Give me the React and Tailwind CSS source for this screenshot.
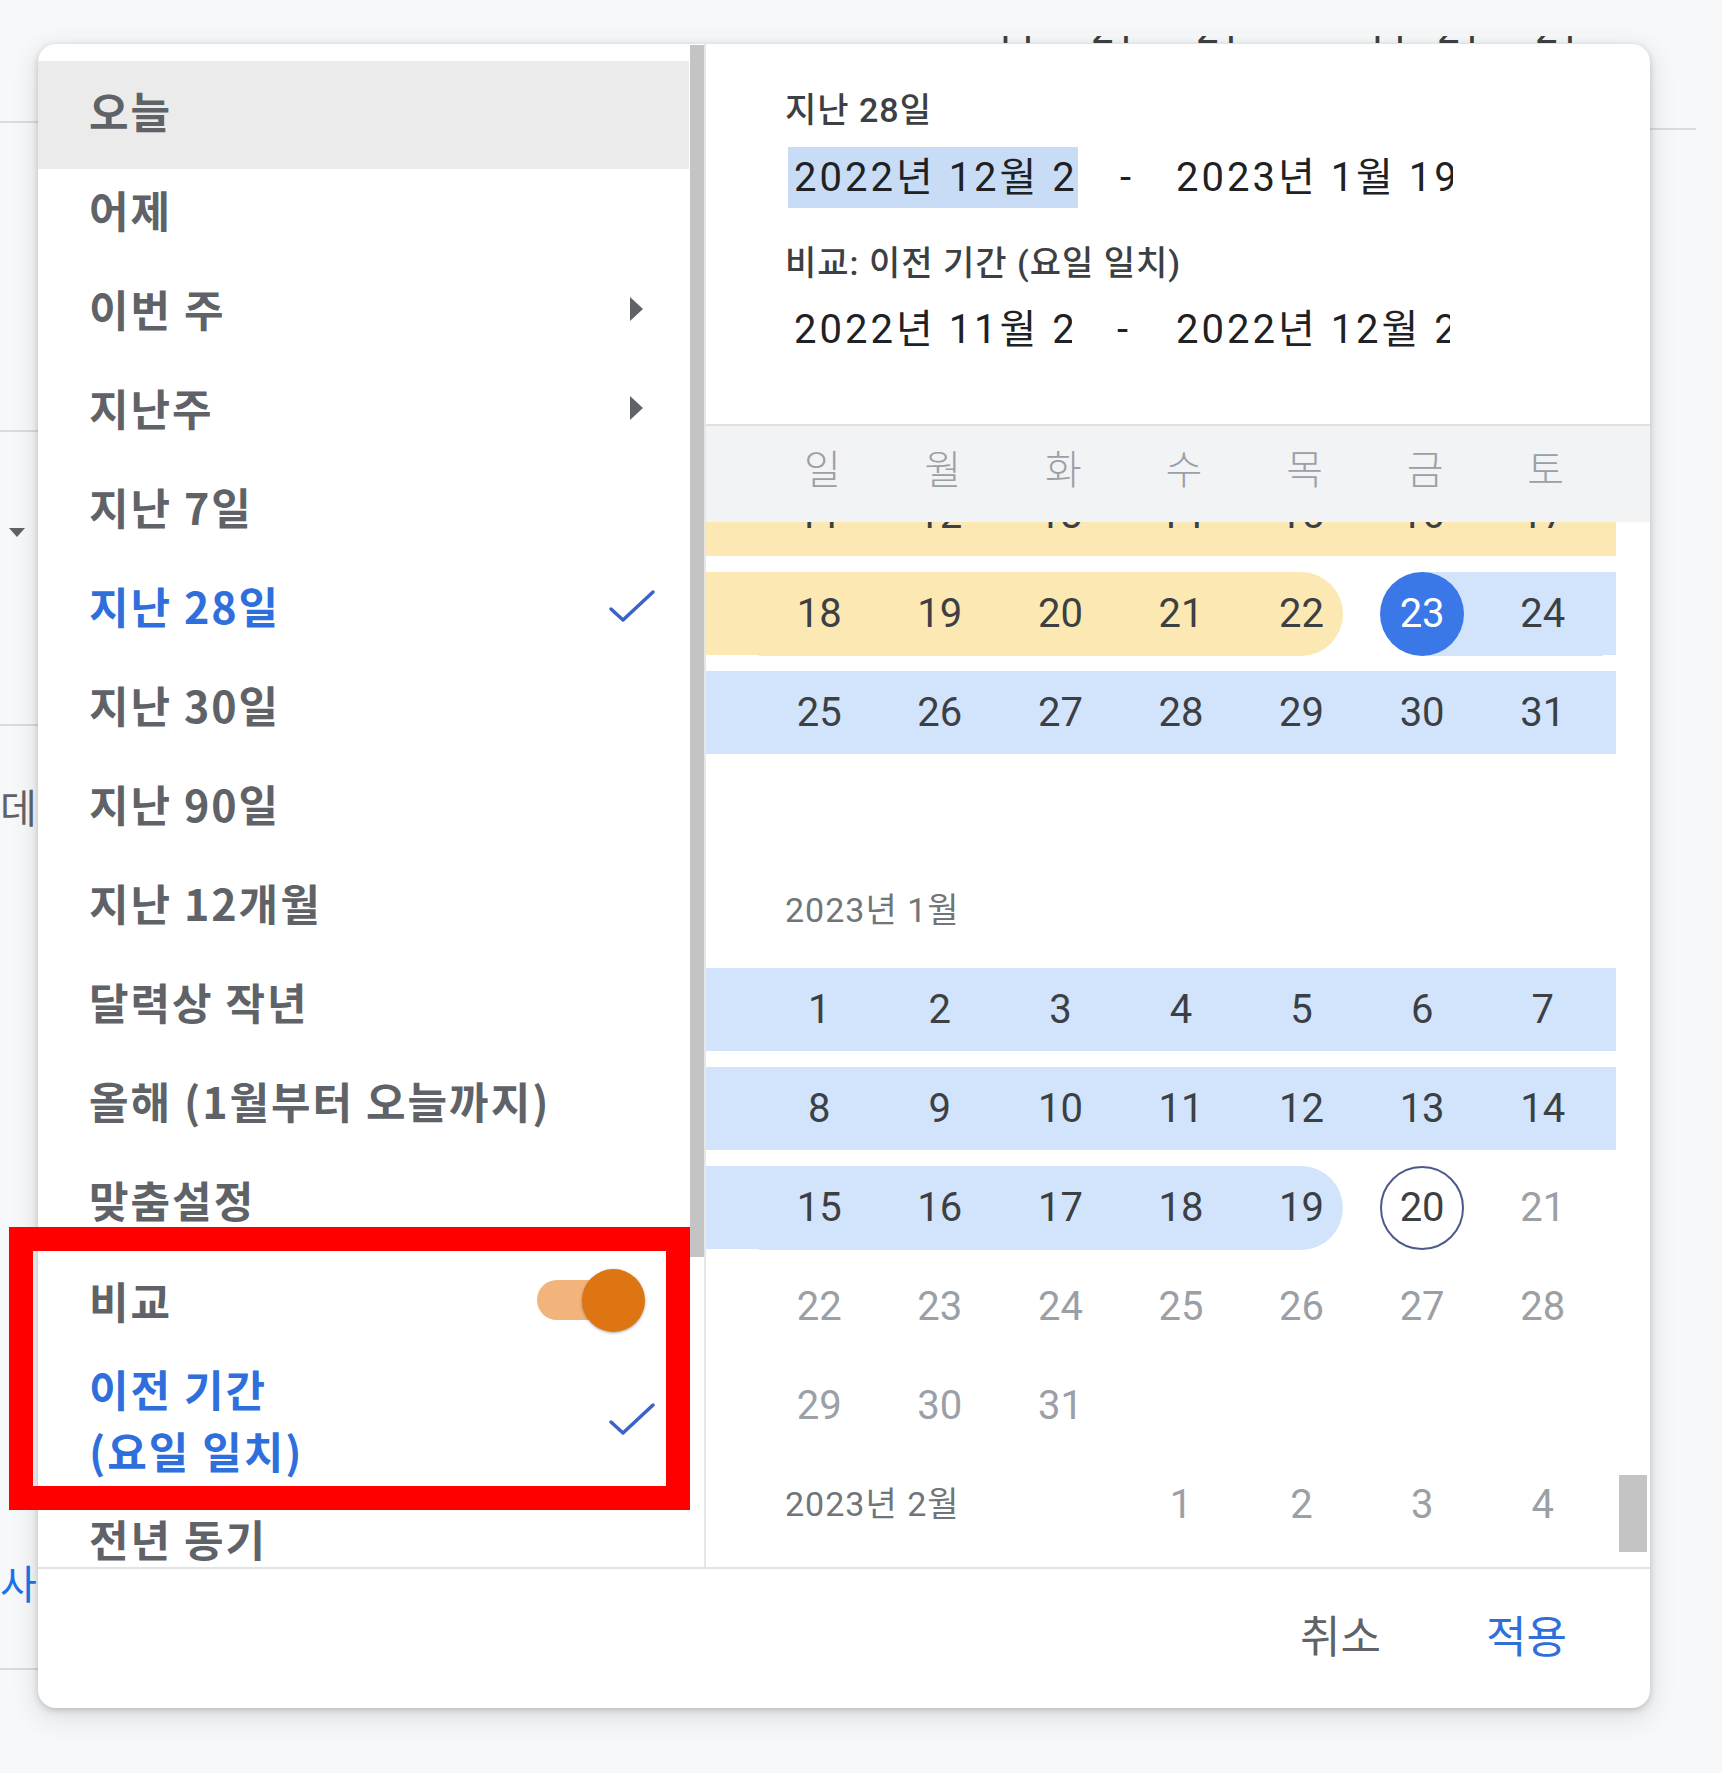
import React from 'react'
import clsx from 'clsx'

const MENU = [
  { label: '오늘', highlight: true },
  { label: '어제' },
  { label: '이번 주', arrow: true },
  { label: '지난주', arrow: true },
  { label: '지난 7일' },
  { label: '지난 28일', active: true },
  { label: '지난 30일' },
  { label: '지난 90일' },
  { label: '지난 12개월' },
  { label: '달력상 작년' },
  { label: '올해 (1월부터 오늘까지)' },
  { label: '맞춤설정' },
]

const WEEK = ['일', '월', '화', '수', '목', '금', '토']

const PAD = {
  y: 'bg-[#fce8b2]',
  b: 'bg-[#d2e3fc]',
  n: '',
}

// t: y | b | yEnd | bEnd | start | today | off
const ROWS = [
  { l: 'y', r: 'y', cells: [11, 12, 13, 14, 15, 16, 17].map((n) => ({ n, t: 'y' })) },
  {
    l: 'y', r: 'b',
    cells: [
      { n: 18, t: 'y' }, { n: 19, t: 'y' }, { n: 20, t: 'y' }, { n: 21, t: 'y' },
      { n: 22, t: 'yEnd' }, { n: 23, t: 'start' }, { n: 24, t: 'b' },
    ],
  },
  { l: 'b', r: 'b', cells: [25, 26, 27, 28, 29, 30, 31].map((n) => ({ n, t: 'b' })) },
  { empty: true },
  { label: '2023년 1월' },
  { l: 'b', r: 'b', cells: [1, 2, 3, 4, 5, 6, 7].map((n) => ({ n, t: 'b' })) },
  { l: 'b', r: 'b', cells: [8, 9, 10, 11, 12, 13, 14].map((n) => ({ n, t: 'b' })) },
  {
    l: 'b', r: 'n',
    cells: [
      { n: 15, t: 'b' }, { n: 16, t: 'b' }, { n: 17, t: 'b' }, { n: 18, t: 'b' },
      { n: 19, t: 'bEnd' }, { n: 20, t: 'today' }, { n: 21, t: 'off' },
    ],
  },
  { l: 'n', r: 'n', cells: [22, 23, 24, 25, 26, 27, 28].map((n) => ({ n, t: 'off' })) },
  { l: 'n', r: 'n', cells: [{ n: 29, t: 'off' }, { n: 30, t: 'off' }, { n: 31, t: 'off' }, null, null, null, null] },
]

function Check() {
  return (
    <svg width="48" height="34" viewBox="0 0 48 34" fill="none">
      <path d="M3 20 L15 31 L45 3" stroke="#3a62c9" strokeWidth="3.5" strokeLinecap="round" strokeLinejoin="round" />
    </svg>
  )
}

function MenuItem({ label, active, arrow, highlight }) {
  return (
    <div
      className={clsx(
        'flex shrink-0 items-center pl-[51px] pr-[33px]',
        highlight ? '-mb-[9px] h-[108px] bg-[#ebebeb] pb-[10px]' : 'h-[99px]'
      )}
    >
      <span
        className={clsx(
          'flex-1 whitespace-nowrap text-[43px] font-semibold tracking-[2px]',
          active ? 'text-[#2f6fdc]' : 'text-[#5f6368]'
        )}
      >
        {label}
      </span>
      {arrow && (
        <svg width="15" height="26" viewBox="0 0 15 26" className="mr-[12px]">
          <polygon points="1,1 14,13 1,25" fill="#5f6368" />
        </svg>
      )}
      {active && <Check />}
    </div>
  )
}

function Cell({ c }) {
  if (!c) return <div />
  const { n, t } = c
  if (t === 'yEnd' || t === 'bEnd') {
    return (
      <div className="flex h-full">
        <div
          className={clsx(
            'mr-[19px] flex flex-1 items-center justify-center rounded-r-full pl-[19px] text-[#3c4043]',
            t === 'yEnd' ? 'bg-[#fce8b2]' : 'bg-[#d2e3fc]'
          )}
        >
          {n}
        </div>
      </div>
    )
  }
  if (t === 'start') {
    return (
      <div className="flex h-full items-center justify-center bg-[linear-gradient(90deg,transparent_50%,#d2e3fc_50%)]">
        <div className="flex h-[84px] w-[84px] items-center justify-center rounded-full bg-[#3b78e7] text-white">{n}</div>
      </div>
    )
  }
  if (t === 'today') {
    return (
      <div className="flex h-full items-center justify-center">
        <div className="flex h-[84px] w-[84px] items-center justify-center rounded-full border-2 border-[#4b5a8a] text-[#3c4043]">{n}</div>
      </div>
    )
  }
  return (
    <div
      className={clsx(
        'flex h-full items-center justify-center',
        t === 'y' && 'bg-[#fce8b2] text-[#3c4043]',
        t === 'b' && 'bg-[#d2e3fc] text-[#3c4043]',
        t === 'off' && 'text-[#9aa0a6]'
      )}
    >
      {n}
    </div>
  )
}

function CalRow({ row }) {
  if (row.empty) return <div className="h-[99px] shrink-0" />
  if (row.label) {
    return (
      <div className="my-[8px] flex h-[83px] shrink-0 items-center pl-[79px] text-[34px] tracking-[1px] text-[#70757a]">{row.label}</div>
    )
  }
  return (
    <div className="my-[8px] flex h-[83px] shrink-0">
      <div className={clsx('w-[53px] shrink-0', PAD[row.l])} />
      <div className="grid w-[844px] shrink-0 grid-cols-7">
        {row.cells.map((c, i) => <Cell key={i} c={c} />)}
      </div>
      <div className={clsx('w-[13px] shrink-0', PAD[row.r])} />
    </div>
  )
}

function Background() {
  return (
    <div className="flex h-[1773px] w-full">
      <div className="flex w-[40px] shrink-0 flex-col font-['Noto_Sans_CJK_KR',sans-serif]">
        <div className="h-[121px]" />
        <div className="h-[309px] border-t-2 border-[#dadce0]" />
        <div className="flex h-[294px] flex-col border-t-2 border-[#dadce0] pl-[9px] pt-[96px]">
          <svg width="16" height="10" viewBox="0 0 16 10">
            <polygon points="0,0 16,0 8,9" fill="#5f6368" />
          </svg>
        </div>
        <div className="flex h-[944px] flex-col border-t-2 border-[#dadce0] pt-[56px]">
          <span className="whitespace-nowrap text-[40px] leading-[48px] text-[#5f6368]">데이터</span>
          <span className="mt-[728px] whitespace-nowrap text-[40px] leading-[48px] text-[#1a73e8]">사용</span>
        </div>
        <div className="border-t-2 border-[#dadce0]" />
      </div>
      <div className="flex flex-1 flex-col">
        <div className="h-[36px]" />
        <div className="flex h-[8px] overflow-hidden pl-[953px] font-['Roboto',sans-serif] text-[40px] leading-[40px] text-[#3c4043]">
          <div className="-mt-[26px] flex">
            <span className="w-[98px]">11</span>
            <span className="w-[105px]">21</span>
            <span className="w-[169px]">21</span>
            <span className="w-[72px]">11</span>
            <span className="w-[98px]">21</span>
            <span>21</span>
          </div>
        </div>
      </div>
      <div className="flex w-[72px] shrink-0 flex-col">
        <div className="h-[128px]" />
        <div className="w-[46px] border-t-2 border-[#dadce0]" />
      </div>
    </div>
  )
}

export default function App() {
  return (
    <div className="relative h-[1773px] w-[1722px] overflow-hidden bg-[#f7f8fa]">
      <Background />

      {/* date range dialog */}
      <div className="absolute left-[38px] top-[44px] flex h-[1664px] w-[1612px] flex-col overflow-hidden rounded-[18px] bg-white shadow-[0_2px_6px_rgba(60,64,67,0.25),0_8px_24px_4px_rgba(60,64,67,0.12)]">
        <div className="flex h-[1523px] shrink-0">
          {/* presets */}
          <div className="flex w-[651px] shrink-0 flex-col overflow-hidden pt-[17px] font-['Noto_Sans_CJK_KR',sans-serif]">
            {MENU.map((m) => <MenuItem key={m.label} {...m} />)}
            <div className="flex h-[100px] shrink-0 items-center border-t-2 border-[#e3e3e3] pl-[51px] pr-[44px]">
              <span className="flex-1 text-[43px] font-semibold tracking-[2px] text-[#5f6368]">비교</span>
              <div className="flex items-center">
                <div className="h-[40px] w-[76px] rounded-full bg-[#f3b47c]" />
                <div className="-ml-[31px] h-[63px] w-[63px] rounded-full bg-[#dd7612] shadow-[0_1px_3px_rgba(0,0,0,0.35)]" />
              </div>
            </div>
            <div className="flex h-[140px] shrink-0 items-center pl-[51px] pr-[33px]">
              <div className="flex flex-1 flex-col text-[43px] font-semibold leading-[62px] tracking-[2px] text-[#2f6fdc]">
                <span>이전 기간</span>
                <span>(요일 일치)</span>
              </div>
              <Check />
            </div>
            <div className="flex h-[99px] shrink-0 items-center pl-[51px]">
              <span className="text-[43px] font-semibold tracking-[2px] text-[#5f6368]">전년 동기</span>
            </div>
          </div>

          {/* menu scrollbar */}
          <div className="w-[17px] shrink-0 border-r-2 border-[#e6e6e6] pl-[1px] pt-[1px]">
            <div className="h-[1212px] w-[14px] bg-[#c4c4c4]" />
          </div>

          {/* calendar side */}
          <div className="flex w-[944px] shrink-0 flex-col font-['Roboto','Noto_Sans_CJK_KR',sans-serif]">
            <div className="h-[380px] shrink-0 pl-[79px] pt-[45px] text-[#202124]">
              <div className="text-[34px] font-medium leading-[42px] tracking-[1px] text-[#3c4043]">지난 28일</div>
              <div className="mt-[16px] flex h-[61px] items-center text-[40px] leading-[61px] tracking-[3px]">
                <div className="ml-[3px] h-full w-[290px] overflow-hidden whitespace-nowrap bg-[#c9dcf6] pl-[6px]">2022년 12월 23일</div>
                <div className="w-[98px] text-center">-</div>
                <div className="w-[277px] overflow-hidden whitespace-nowrap">2023년 1월 19일</div>
              </div>
              <div className="mt-[34px] text-[34px] font-medium leading-[42px] tracking-[1px] text-[#3c4043]">비교: 이전 기간 (요일 일치)</div>
              <div className="mt-[15px] flex h-[61px] items-center text-[40px] leading-[61px] tracking-[3px]">
                <div className="ml-[3px] h-full w-[284px] overflow-hidden whitespace-nowrap pl-[6px]">2022년 11월 25일</div>
                <div className="w-[104px] text-center">-</div>
                <div className="w-[274px] overflow-hidden whitespace-nowrap">2022년 12월 22일</div>
              </div>
            </div>

            <div className="flex h-[98px] shrink-0 items-center border-t-2 border-[#e0e0e0] bg-[#f1f3f4] pl-[56px] pr-[44px]">
              <div className="grid w-[844px] grid-cols-7 font-['Noto_Sans_CJK_KR',sans-serif] text-[40px] font-light text-[#9aa0a6]">
                {WEEK.map((w) => <span key={w} className="-mt-[14px] text-center">{w}</span>)}
              </div>
            </div>

            <div className="flex min-h-0 flex-1">
              <div className="flex w-[910px] shrink-0 flex-col overflow-hidden text-[40px]">
                <div className="-mt-[57px] flex flex-col">
                  {ROWS.map((r, i) => <CalRow key={i} row={r} />)}
                  <div className="my-[8px] flex h-[83px] shrink-0">
                    <div className="w-[53px] shrink-0" />
                    <div className="grid w-[844px] shrink-0 grid-cols-7">
                      <div className="col-span-3 flex items-center pl-[26px] text-[34px] tracking-[1px] text-[#70757a]">2023년 2월</div>
                      {[1, 2, 3, 4].map((n) => <Cell key={n} c={{ n, t: 'off' }} />)}
                    </div>
                  </div>
                </div>
              </div>
              <div className="flex w-[34px] shrink-0 flex-col justify-end pb-[15px] pl-[3px]">
                <div className="h-[77px] w-[28px] bg-[#c4c4c4]" />
              </div>
            </div>
          </div>
        </div>

        <div className="flex h-[141px] shrink-0 items-center justify-end gap-[57px] border-t-2 border-[#e3e3e3] pb-[10px] pr-[59px] font-['Noto_Sans_CJK_KR',sans-serif] text-[44px]">
          <button className="px-[24px] text-[#5f6368]">취소</button>
          <button className="px-[24px] text-[#2f6fdc]">적용</button>
        </div>
      </div>

      {/* annotation */}
      <div className="absolute left-[9px] top-[1227px] h-[283px] w-[681px] border-[24px] border-[#ff0000]" />
    </div>
  )
}
